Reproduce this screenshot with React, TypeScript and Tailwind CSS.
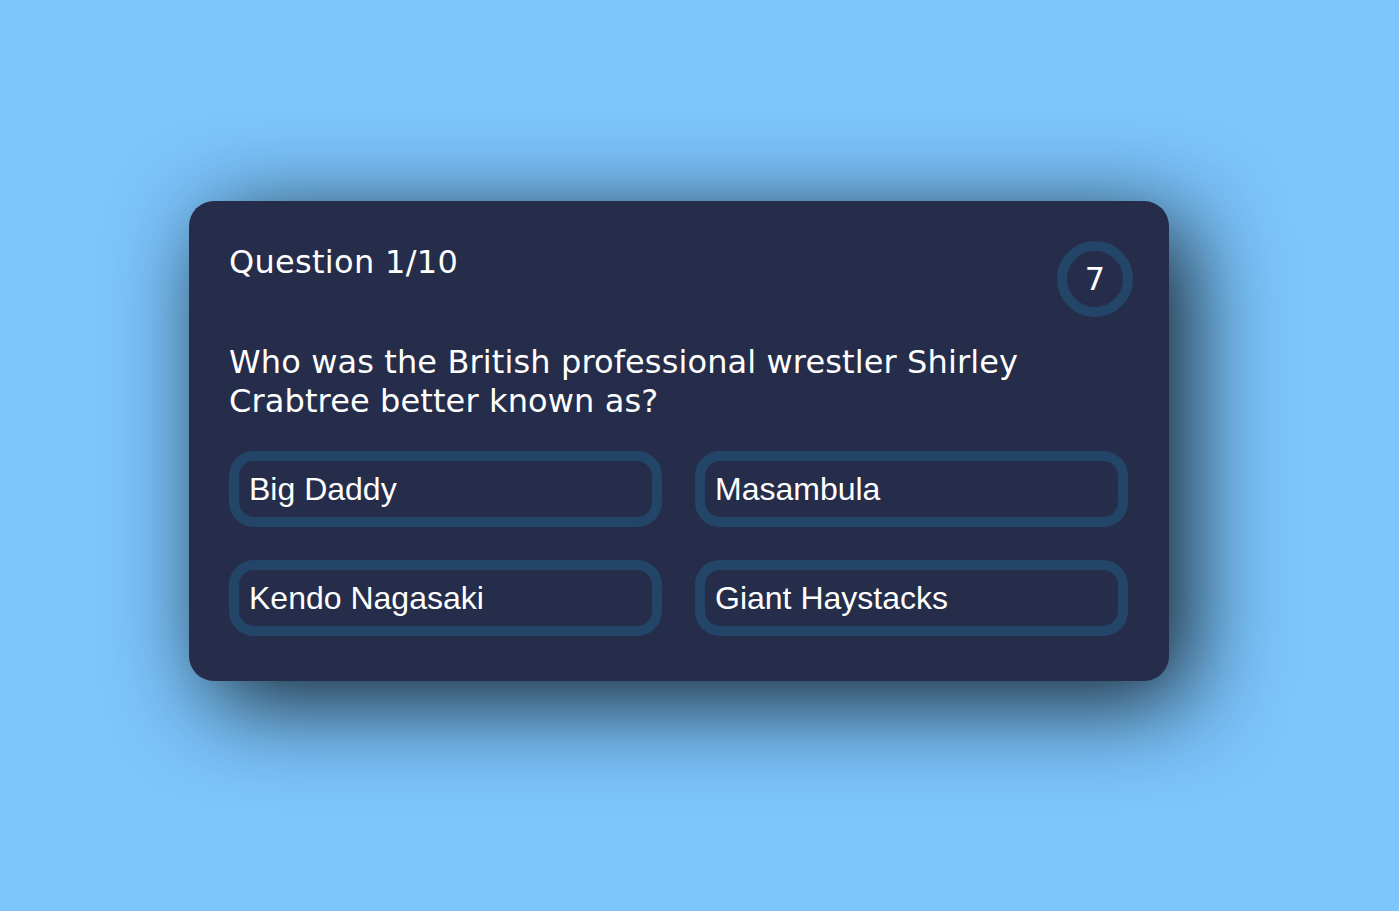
import React from "react";

const answers = ["Big Daddy", "Masambula", "Kendo Nagasaki", "Giant Haystacks"];

function App() {
  return (
    <div className="w-full min-h-screen bg-[#7cc5fd] flex items-center justify-center pr-[41px] pb-[29px]">
      {/* card */}
      <div className="w-[980px] h-[480px] bg-[#252d4a] rounded-[25px] shadow-[20px_20px_95px_0px_rgba(0,0,0,0.85)] pt-[40px] pl-[40px] pr-[41px] text-white">
        <div className="flex flex-row justify-between items-start mr-[-5px]">
          <h1 className="pt-[2px] font-['Verdana','DejaVu_Sans',sans-serif] text-[32px] leading-[39px] tracking-[0.3px]">
            Question 1/10
          </h1>
          <div className="w-[76px] h-[76px] rounded-full border-[10px] border-[#234668] flex justify-center items-center font-['Verdana','DejaVu_Sans',sans-serif] text-[32px]">
            7
          </div>
        </div>
        <p className="mt-[26px] max-w-[840px] font-['Verdana','DejaVu_Sans',sans-serif] text-[32px] leading-[39px] tracking-[0.12px]">
          Who was the British professional wrestler Shirley Crabtree better known as?
        </p>
        <div className="grid grid-cols-2 gap-[33px] mt-[30px]">
          {answers.map((a) => (
            <button
              key={a}
              className="h-[76px] border-[10px] border-[#234668] rounded-[25px] bg-[#252d4a] text-left px-[10px] font-['Arial','Liberation_Sans',sans-serif] text-[32px] text-white leading-[37px]"
            >
              {a}
            </button>
          ))}
        </div>
      </div>
    </div>
  );
}

export default App;
